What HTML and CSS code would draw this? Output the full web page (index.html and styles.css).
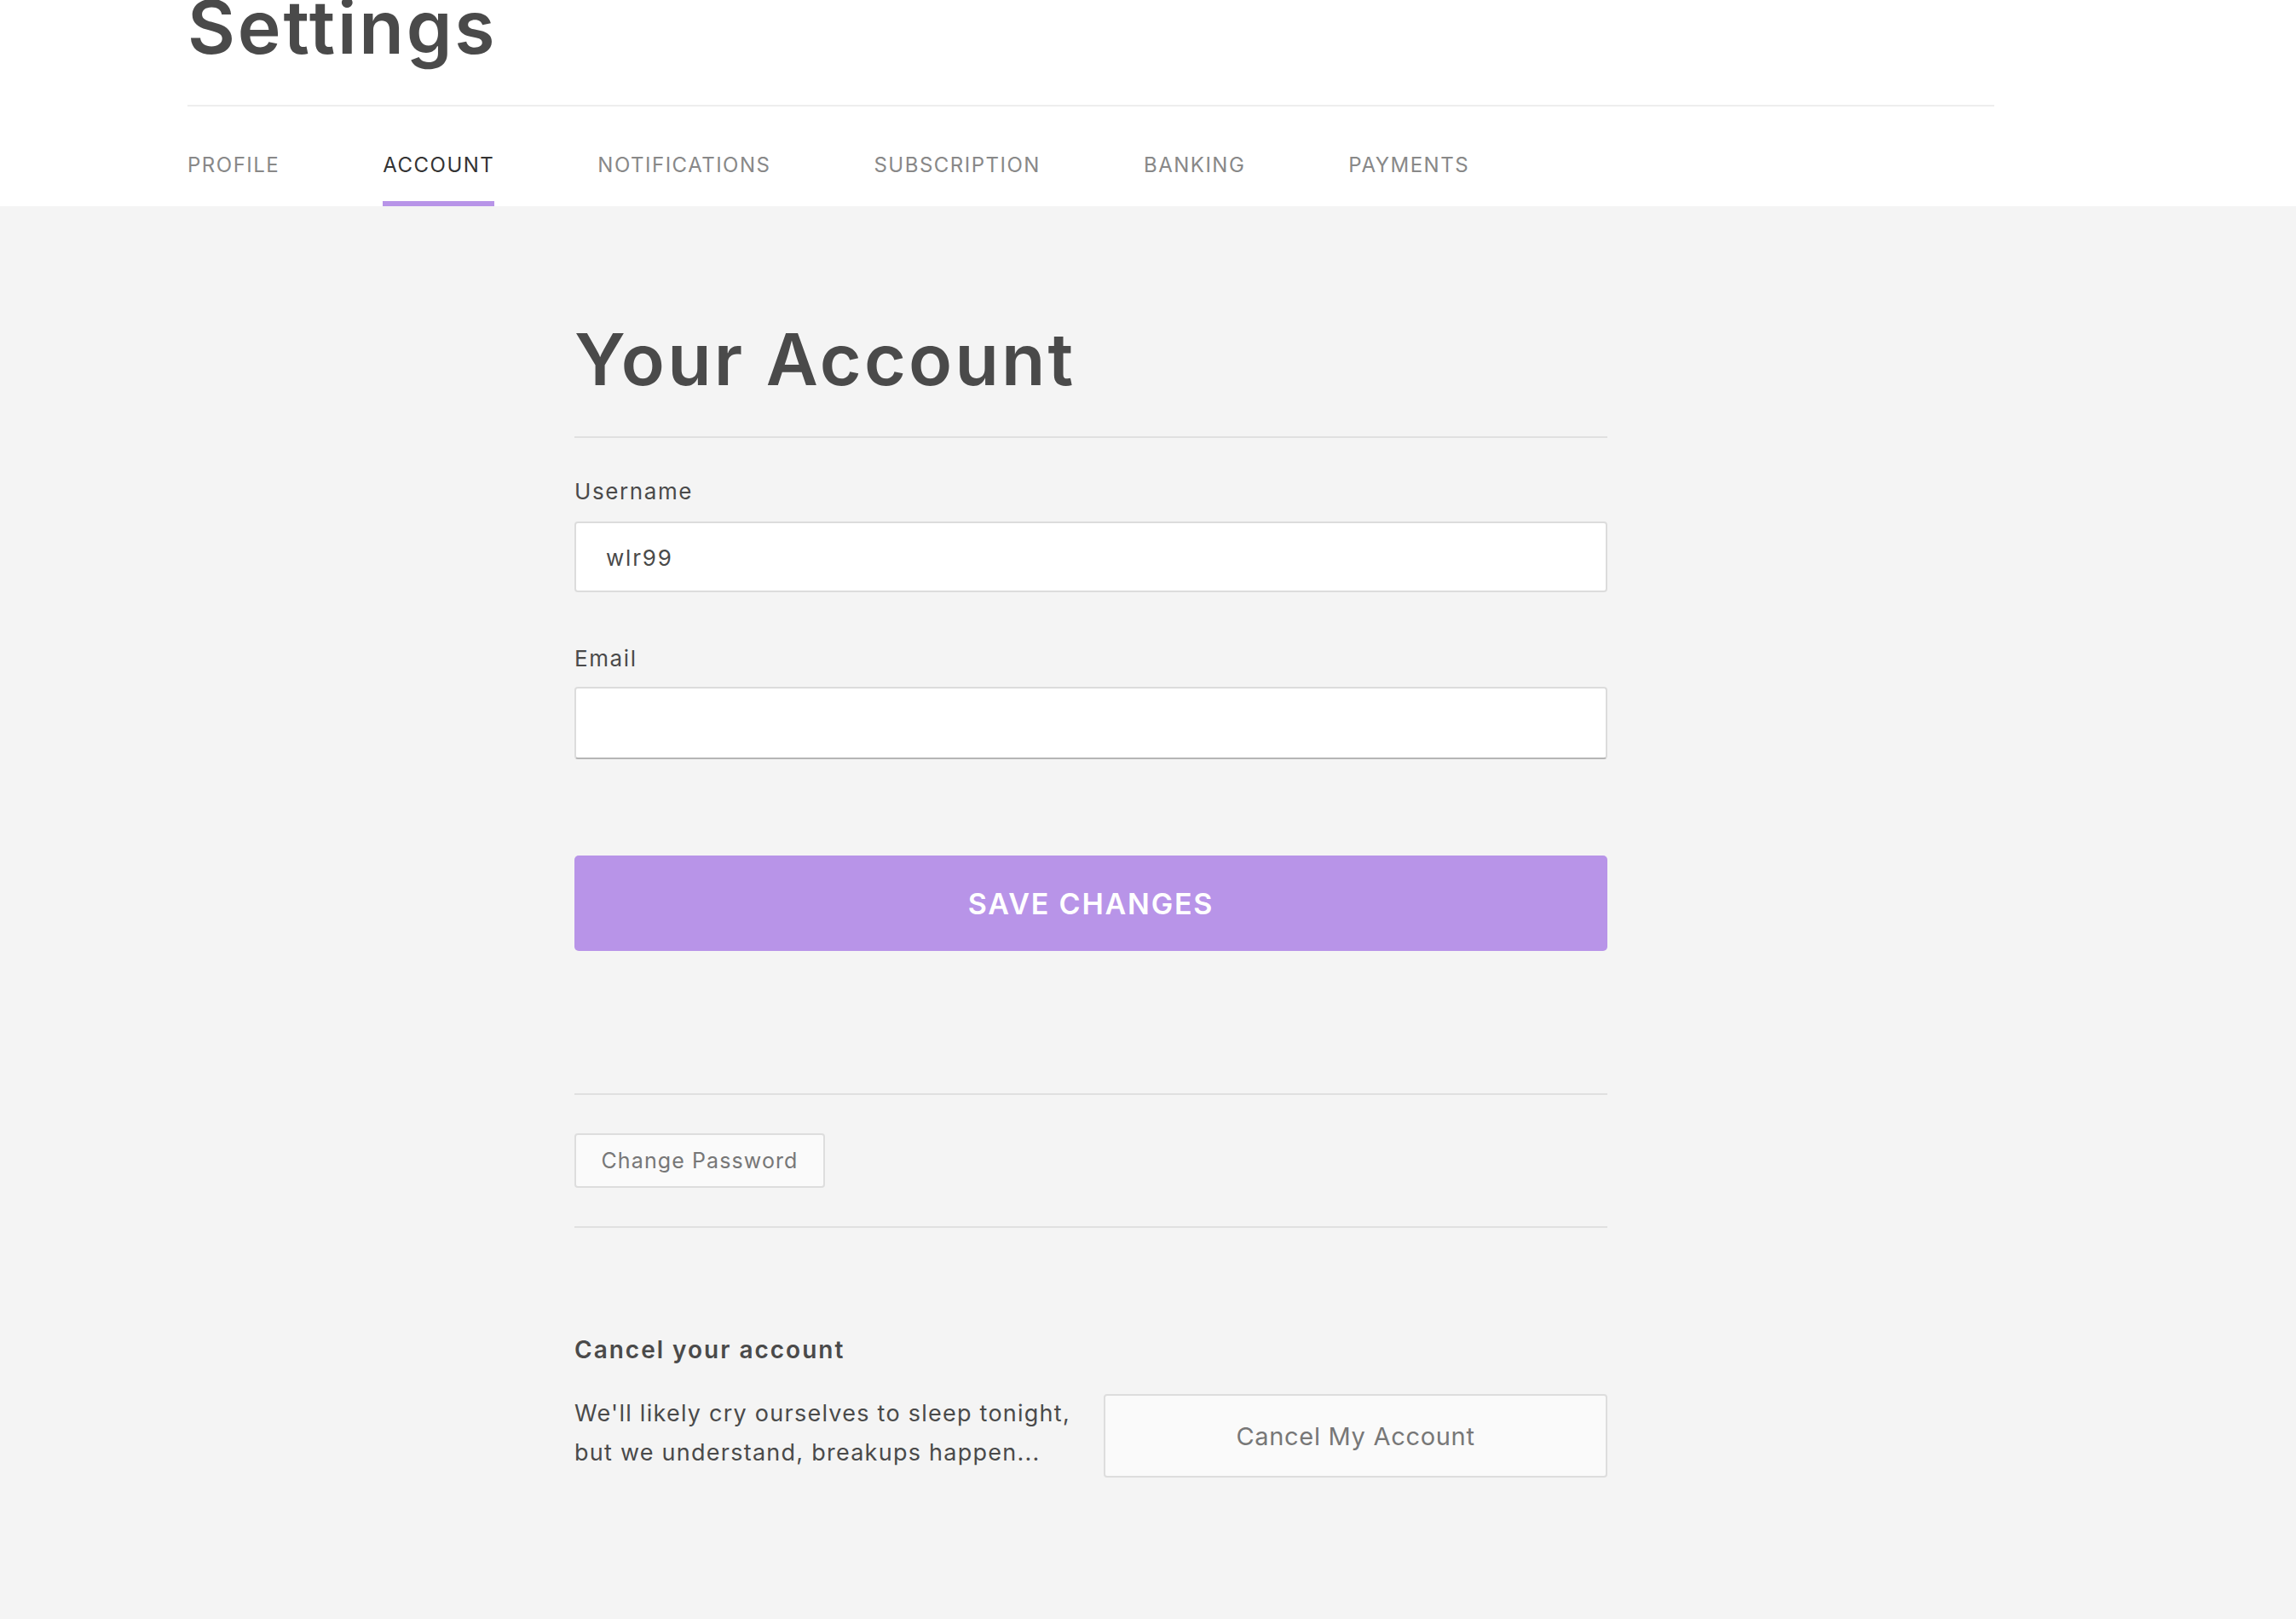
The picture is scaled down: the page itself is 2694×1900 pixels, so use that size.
FILE: index.html
```html
<!DOCTYPE html>
<html lang="en">
<head>
<meta charset="utf-8">
<title>Settings</title>
<link rel="stylesheet" href="styles.css">
</head>
<body>
<header class="header">
  <h1 class="page-title">Settings</h1>
  <nav class="tabs">
    <a class="tab">PROFILE</a>
    <a class="tab active">ACCOUNT</a>
    <a class="tab">NOTIFICATIONS</a>
    <a class="tab">SUBSCRIPTION</a>
    <a class="tab">BANKING</a>
    <a class="tab">PAYMENTS</a>
  </nav>
</header>
<main class="main">
  <section class="account">
    <h2 class="section-title">Your Account</h2>
    <hr class="rule rule-title">
    <label class="field-label">Username</label>
    <input class="field" type="text" value="wlr99">
    <label class="field-label field-label-2">Email</label>
    <input class="field field-email" type="text" value="">
    <button class="btn-save">SAVE CHANGES</button>
    <hr class="rule rule-3">
    <button class="btn-small">Change Password</button>
    <hr class="rule rule-4">
    <h3 class="cancel-title">Cancel your account</h3>
    <div class="cancel-row">
      <p class="cancel-text">We'll likely cry ourselves to sleep tonight, but we understand, breakups happen...</p>
      <button class="btn-cancel">Cancel My Account</button>
    </div>
  </section>
</main>
</body>
</html>
```
FILE: styles.css
```css
html, body {
  margin: 0;
  padding: 0;
}
body {
  background: #f4f4f4;
  font-family: "Inter", "Liberation Sans", sans-serif;
  color: #4a4a4a;
  min-height: 1900px;
}
.header {
  background: #ffffff;
  padding: 0 354px 0 220px;
}
.page-title {
  margin: -11px 0 0 0;
  font-size: 86px;
  line-height: 86px;
  font-weight: 600;
  color: #4a4a4a;
  padding-bottom: 48px;
  border-bottom: 2px solid #eeeeee;
  letter-spacing: 2.8px;
}
.tabs {
  display: flex;
  gap: 121px;
}
.tab {
  display: block;
  padding: 54px 0 27px;
  line-height: 30px;
  font-size: 24px;
  letter-spacing: 1.5px;
  color: #888888;
  border-bottom: 6px solid transparent;
  cursor: pointer;
}
.tab.active {
  color: #333333;
  border-bottom-color: #b894e8;
}
.main {
  padding: 138px 0 120px 674px;
}
.account {
  width: 1212px;
  display: flex;
  flex-direction: column;
}
.section-title {
  margin: 0;
  font-size: 84px;
  line-height: 84px;
  font-weight: 600;
  color: #4a4a4a;
  letter-spacing: 3.2px;
}
.rule {
  border: 0;
  height: 2px;
  background: #e0e0e0;
  margin: 0;
  width: 100%;
}
.rule-title {
  margin-top: 48px;
}
.field-label {
  display: block;
  margin-top: 47px;
  font-size: 26px;
  line-height: 31px;
  color: #4a4a4a;
  letter-spacing: 1.6px;
}
.field-label-2 {
  margin-top: 62px;
}
.field {
  box-sizing: border-box;
  margin-top: 20px;
  height: 83px;
  width: 100%;
  border: 2px solid #dcdcdc;
  border-radius: 4px;
  background: #ffffff;
  padding: 2px 35px 0;
  font-family: inherit;
  font-size: 26px;
  color: #4a4a4a;
  letter-spacing: 1.8px;
  outline: none;
}
.field-email {
  margin-top: 18px;
  height: 85px;
  border-bottom-color: #b5b5b5;
}
.btn-save {
  margin-top: 113px;
  height: 112px;
  width: 100%;
  border: 0;
  border-radius: 5px;
  background: #b894e8;
  color: #ffffff;
  font-family: inherit;
  font-size: 34px;
  font-weight: 600;
  letter-spacing: 1.8px;
  cursor: pointer;
}
.rule-3 {
  margin-top: 167px;
}
.btn-small {
  align-self: flex-start;
  margin-top: 45px;
  height: 64px;
  width: 294px;
  box-sizing: border-box;
  background: #fafafa;
  border: 2px solid #dddddd;
  border-radius: 4px;
  color: #777777;
  font-family: inherit;
  font-size: 25px;
  letter-spacing: 1.1px;
  cursor: pointer;
}
.rule-4 {
  margin-top: 45px;
}
.cancel-title {
  margin: 126px 0 0;
  font-size: 28px;
  line-height: 34px;
  font-weight: 600;
  color: #4a4a4a;
  letter-spacing: 2px;
}
.cancel-row {
  margin-top: 35px;
  display: grid;
  grid-template-columns: 1fr 591px;
  gap: 34px;
  align-items: start;
}
.cancel-text {
  margin: 0;
  font-size: 27px;
  line-height: 46px;
  color: #4a4a4a;
  letter-spacing: 1.25px;
}
.btn-cancel {
  margin-top: 0;
  height: 98px;
  width: 100%;
  box-sizing: border-box;
  background: #fafafa;
  border: 2px solid #dddddd;
  border-radius: 4px;
  color: #777777;
  font-family: inherit;
  font-size: 29px;
  letter-spacing: 0.7px;
  cursor: pointer;
}
```
